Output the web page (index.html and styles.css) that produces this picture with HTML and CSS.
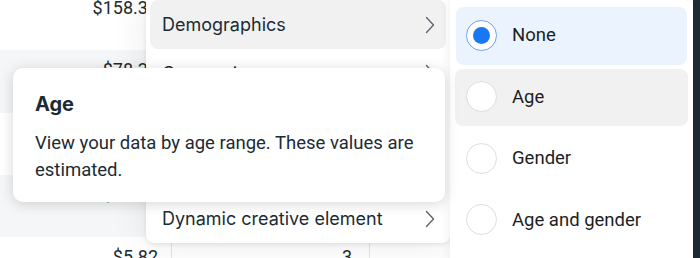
FILE: index.html
```html
<!DOCTYPE html>
<html lang="en">
<head>
  <meta charset="UTF-8">
  <title>Breakdown menu</title>
  <link rel="stylesheet" href="styles.css">
</head>
<body>
<div class="page">
  <!-- Report table behind the menus -->
  <div class="table">
    <div class="row first">
      <div class="cell amount">$158.37</div>
      <div class="cell count">12</div>
      <div class="cell rest"></div>
    </div>
    <div class="row alt">
      <div class="cell amount">$78.31</div>
      <div class="cell count">7</div>
      <div class="cell rest"></div>
    </div>
    <div class="row">
      <div class="cell amount">$41.06</div>
      <div class="cell count">5</div>
      <div class="cell rest"></div>
    </div>
    <div class="row alt">
      <div class="cell amount">$12.40</div>
      <div class="cell count">4</div>
      <div class="cell rest"></div>
    </div>
    <div class="row">
      <div class="cell amount">$5.82</div>
      <div class="cell count">3</div>
      <div class="cell rest"></div>
    </div>
  </div>

  <!-- Breakdown categories -->
  <div class="menu">
    <div class="menu-item active">
      <span>Demographics</span>
      <svg class="chevron" width="10" height="18" viewBox="0 0 10 18"><path d="M1.5 1.5 L8.5 9 L1.5 16.5" fill="none" stroke="#606770" stroke-width="1.4" stroke-linecap="round" stroke-linejoin="round"/></svg>
    </div>
    <div class="menu-item">
      <span>Conversions</span>
      <svg class="chevron" width="10" height="18" viewBox="0 0 10 18"><path d="M1.5 1.5 L8.5 9 L1.5 16.5" fill="none" stroke="#606770" stroke-width="1.4" stroke-linecap="round" stroke-linejoin="round"/></svg>
    </div>
    <div class="menu-item">
      <span>Delivery</span>
      <svg class="chevron" width="10" height="18" viewBox="0 0 10 18"><path d="M1.5 1.5 L8.5 9 L1.5 16.5" fill="none" stroke="#606770" stroke-width="1.4" stroke-linecap="round" stroke-linejoin="round"/></svg>
    </div>
    <div class="menu-item">
      <span>Time</span>
      <svg class="chevron" width="10" height="18" viewBox="0 0 10 18"><path d="M1.5 1.5 L8.5 9 L1.5 16.5" fill="none" stroke="#606770" stroke-width="1.4" stroke-linecap="round" stroke-linejoin="round"/></svg>
    </div>
    <div class="menu-item">
      <span>Dynamic creative element</span>
      <svg class="chevron" width="10" height="18" viewBox="0 0 10 18"><path d="M1.5 1.5 L8.5 9 L1.5 16.5" fill="none" stroke="#606770" stroke-width="1.4" stroke-linecap="round" stroke-linejoin="round"/></svg>
    </div>
  </div>

  <!-- Demographics options -->
  <div class="submenu">
    <div class="option selected">
      <span class="radio"><span class="dot"></span></span>
      <span>None</span>
    </div>
    <div class="option hover">
      <span class="radio"></span>
      <span>Age</span>
    </div>
    <div class="option">
      <span class="radio"></span>
      <span>Gender</span>
    </div>
    <div class="option">
      <span class="radio"></span>
      <span>Age and gender</span>
    </div>
  </div>

  <!-- Tooltip for hovered option -->
  <div class="tooltip">
    <div class="tooltip-title">Age</div>
    <div class="tooltip-text">View your data by age range. These values are estimated.</div>
  </div>
</div>
</body>
</html>
```

FILE: styles.css
```css
* {
  margin: 0;
  padding: 0;
  box-sizing: border-box;
}

body {
  font-family: Roboto, 'Liberation Sans', sans-serif;
  color: #1c2b33;
  background: #1c2b33;
}

.page {
  position: relative;
  width: 693px;
  height: 258px;
  overflow: hidden;
  background: #fff;
}

/* Table */
.table {
  margin-top: -12px;
}

.row {
  display: flex;
  height: 62.3px;
  background: #fff;
}

.row.alt {
  background: #f5f6f7;
}

.cell {
  padding-top: 9px;
  font-size: 18px;
  line-height: 22px;
  text-align: right;
  border-right: 1px solid #e4e6eb;
}

.cell.amount {
  width: 172px;
  padding-right: 13px;
}

.cell.count {
  width: 198px;
  padding-right: 17px;
}

.cell.rest {
  flex: 1;
  border-right: none;
}

/* Category menu */
.menu {
  position: absolute;
  left: 146px;
  top: 0;
  width: 304px;
  padding: 0 4px;
  background: #fff;
  border-radius: 0 0 8px 8px;
  box-shadow: 0 0 36px rgba(0, 0, 0, 0.09), 0 2px 4px rgba(0, 0, 0, 0.08);
  z-index: 1;
}

.menu-item {
  display: flex;
  align-items: center;
  justify-content: space-between;
  height: 48.5px;
  padding: 1px 11px 0 12px;
  border-radius: 8px;
  font-family: Inter, Roboto, sans-serif;
  font-size: 18px;
  color: #1c2b33;
}

.menu-item.active {
  background: #f1f1f1;
}

/* Option menu */
.submenu {
  position: absolute;
  left: 450px;
  top: 0;
  width: 243px;
  height: 270px;
  padding: 7px 6px 0;
  display: flex;
  flex-direction: column;
  gap: 4px;
  background: #fff;
  border-radius: 0 8px 0 0;
  box-shadow: 0 0 12px rgba(0, 0, 0, 0.08);
  z-index: 2;
}

.option {
  display: flex;
  align-items: center;
  gap: 15px;
  height: 57.5px;
  padding-left: 10px;
  padding-bottom: 1px;
  border-radius: 8px;
  font-size: 18.5px;
  color: #1c1e21;
}

.option.selected {
  background: #ebf3ff;
}

.option.hover {
  background: #f1f1f1;
  margin: 0 -1px;
  padding-left: 11px;
}

.radio {
  display: flex;
  align-items: center;
  justify-content: center;
  width: 31px;
  height: 31px;
  border-radius: 50%;
  background: #fff;
  border: 1px solid #dcdee2;
  flex-shrink: 0;
}

.option.selected .radio {
  border: 1.5px solid #6aa3f5;
}

.dot {
  width: 17px;
  height: 17px;
  border-radius: 50%;
  background: #1877f2;
}

/* Tooltip */
.tooltip {
  position: absolute;
  left: 13px;
  top: 68px;
  width: 432px;
  height: 134px;
  padding: 25px 18px 0 22px;
  background: #fff;
  border-radius: 10px;
  box-shadow: 0 2px 14px rgba(0, 0, 0, 0.16);
  z-index: 3;
}

.tooltip-title {
  font-family: Inter, Roboto, sans-serif;
  font-size: 20px;
  font-weight: bold;
  line-height: 22px;
}

.tooltip-text {
  margin-top: 15px;
  font-size: 18.5px;
  line-height: 27px;
  color: #1c2b33;
}
```
